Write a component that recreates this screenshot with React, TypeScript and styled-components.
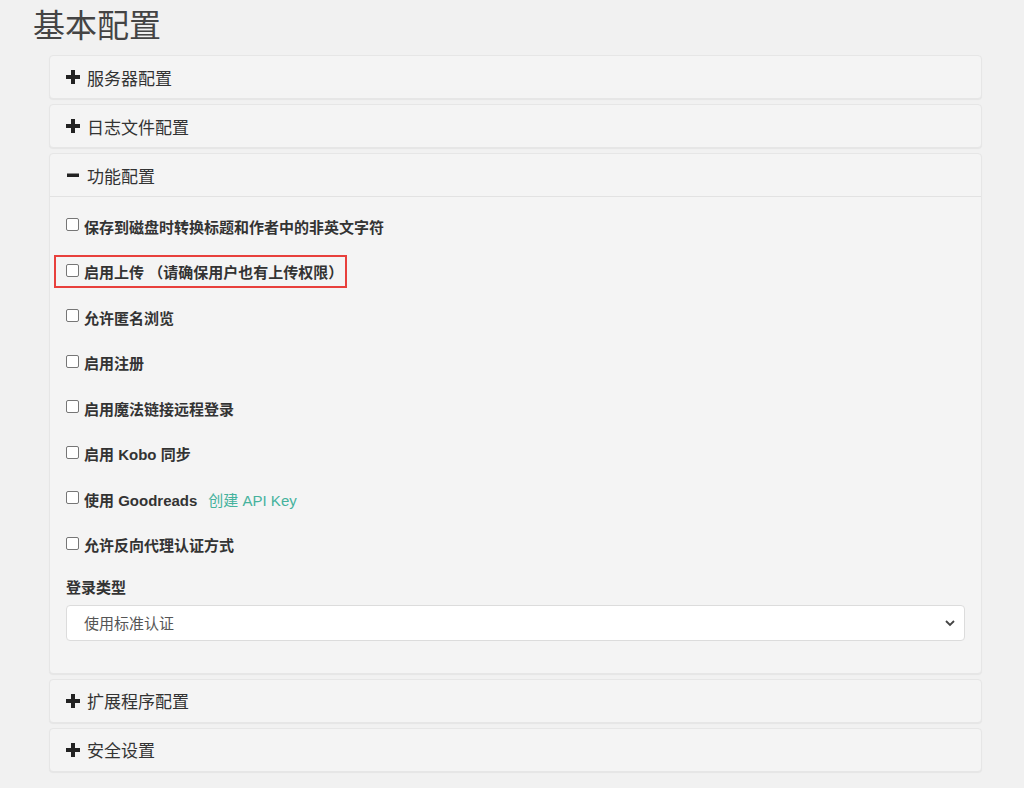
import React from "react";
import styled, { createGlobalStyle } from "styled-components";

const GlobalStyle = createGlobalStyle`
  html, body {
    margin: 0;
    padding: 0;
    background: #f1f1f1;
    font-family: "Liberation Sans", "Noto Sans CJK SC", sans-serif;
    color: #333;
  }
  * { box-sizing: border-box; }
`;

const Page = styled.div`
  padding: 6px 42px 16px 33px;
`;

const Title = styled.h2`
  margin: 0 0 9px 0;
  font-size: 32px;
  font-weight: 400;
  line-height: 40px;
  color: #444;
`;

const PanelList = styled.div`
  display: flex;
  flex-direction: column;
  gap: 5px;
  margin-left: 16px;
`;

const Panel = styled.div`
  background: #f4f4f4;
  border: 1px solid #e6e6e6;
  border-radius: 4px;
  box-shadow: 0 1px 1px rgba(0, 0, 0, 0.05);
`;

const PanelHeading = styled.div<{ $open?: boolean }>`
  display: flex;
  align-items: center;
  gap: 7px;
  height: ${(p) => (p.$open ? "43px" : "42px")};
  padding: 0 16px;
  font-size: 17px;
  color: #333;
  border-bottom: ${(p) => (p.$open ? "1px solid #e2e2e2" : "none")};
`;

const PanelBody = styled.div`
  padding: 19px 16px 32px 16px;
  display: flex;
  flex-direction: column;
`;

const CheckList = styled.div`
  display: flex;
  flex-direction: column;
  gap: 25.5px;
`;

const CheckRow = styled.div`
  height: 20px;
  display: flex;
  align-items: center;
`;

const CheckLabel = styled.label<{ $marked?: boolean }>`
  display: inline-flex;
  align-items: center;
  gap: 5px;
  font-size: 15px;
  font-weight: 700;
  color: #333;
  padding: ${(p) => (p.$marked ? "4px 2px 4px 10px" : "0")};
  margin: ${(p) => (p.$marked ? "-6px -4px -6px -12px" : "0")};
  border: ${(p) => (p.$marked ? "2px solid #e8403c" : "none")};
`;

const Box = styled.span`
  width: 13px;
  height: 13px;
  border: 1px solid #767676;
  border-radius: 2px;
  background: #fff;
  margin-top: -3px;
`;

const Link = styled.a`
  color: #45b29d;
  font-weight: 400;
  text-decoration: none;
  margin-left: 6px;
`;

const FieldLabel = styled.div`
  margin-top: 23px;
  font-size: 15px;
  font-weight: 700;
  line-height: 20px;
  color: #333;
`;

const SelectBox = styled.div`
  margin-top: 7px;
  height: 36px;
  background: #fff;
  border: 1px solid #dcdcdc;
  border-radius: 4px;
  display: flex;
  align-items: center;
  justify-content: space-between;
  padding: 0 8px 0 17px;
  font-size: 15px;
  color: #555;
`;

const Plus = () => (
  <svg width="14" height="14" viewBox="0 0 14 14">
    <path d="M5 0h4v5h5v4H9v5H5V9H0V5h5z" fill="#222" />
  </svg>
);

const Minus = () => (
  <svg width="14" height="14" viewBox="0 0 14 14">
    <path d="M1 5.5h12v3.5H1z" fill="#222" />
  </svg>
);

const Chevron = () => (
  <svg width="12" height="12" viewBox="0 0 12 12">
    <path d="M2 4l4 4 4-4" fill="none" stroke="#444" strokeWidth="1.8" />
  </svg>
);

const options = [
  { text: "保存到磁盘时转换标题和作者中的非英文字符" },
  { text: "启用上传 （请确保用户也有上传权限）", marked: true },
  { text: "允许匿名浏览" },
  { text: "启用注册" },
  { text: "启用魔法链接远程登录" },
  { text: "启用 Kobo 同步" },
  { text: "使用 Goodreads", link: "创建 API Key" },
  { text: "允许反向代理认证方式" },
];

export default function App() {
  return (
    <>
      <GlobalStyle />
      <Page>
        <Title>基本配置</Title>
        <PanelList>
          <Panel>
            <PanelHeading>
              <Plus />
              服务器配置
            </PanelHeading>
          </Panel>
          <Panel>
            <PanelHeading>
              <Plus />
              日志文件配置
            </PanelHeading>
          </Panel>
          <Panel>
            <PanelHeading $open>
              <Minus />
              功能配置
            </PanelHeading>
            <PanelBody>
              <CheckList>
                {options.map((o) => (
                  <CheckRow key={o.text}>
                    <CheckLabel $marked={o.marked}>
                      <Box />
                      {o.text}
                      {o.link && <Link href="#">{o.link}</Link>}
                    </CheckLabel>
                  </CheckRow>
                ))}
              </CheckList>
              <FieldLabel>登录类型</FieldLabel>
              <SelectBox>
                使用标准认证
                <Chevron />
              </SelectBox>
            </PanelBody>
          </Panel>
          <Panel>
            <PanelHeading>
              <Plus />
              扩展程序配置
            </PanelHeading>
          </Panel>
          <Panel>
            <PanelHeading>
              <Plus />
              安全设置
            </PanelHeading>
          </Panel>
        </PanelList>
      </Page>
    </>
  );
}
